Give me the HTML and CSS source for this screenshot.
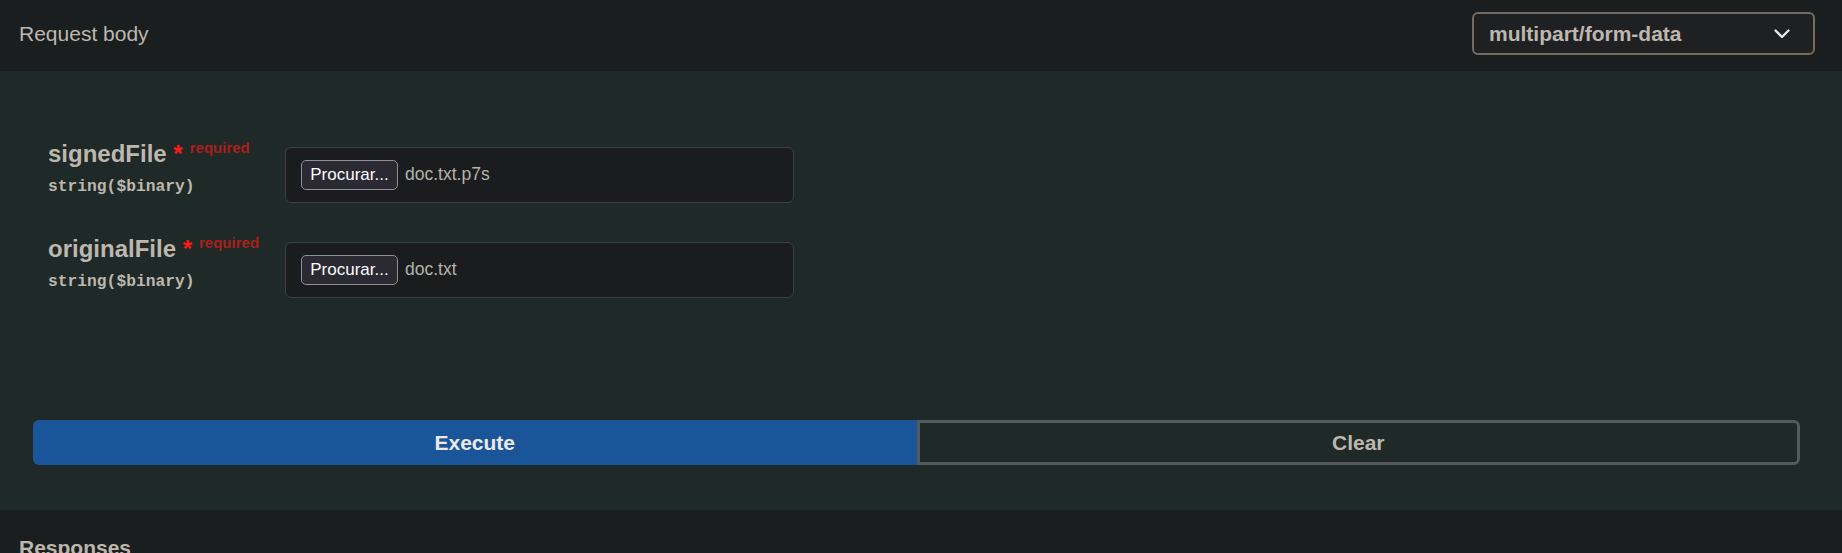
FILE: index.html
```html
<!DOCTYPE html>
<html>
<head>
<meta charset="utf-8">
<link rel="stylesheet" href="styles.css">
</head>
<body>
  <div class="section-header">
    <h4 class="title">Request body</h4>
    <div class="select">
      <span class="select-value">multipart/form-data</span>
      <svg class="chevron" width="16" height="10" viewBox="0 0 16 10"><polyline points="1.5,1.5 8,8 14.5,1.5" fill="none" stroke="#e8e6e3" stroke-width="2.4" stroke-linecap="round" stroke-linejoin="round"/></svg>
    </div>
  </div>
  <div class="section-body">
    <div class="params">
      <div class="param-row">
        <div class="param-label">
          <div class="param-name">signedFile<span class="star">&nbsp;*</span><span class="req">required</span></div>
          <div class="param-type">string($binary)</div>
        </div>
        <div class="file-box">
          <span class="file-btn">Procurar...</span>
          <span class="file-name">doc.txt.p7s</span>
        </div>
      </div>
      <div class="param-row">
        <div class="param-label">
          <div class="param-name">originalFile<span class="star">&nbsp;*</span><span class="req">required</span></div>
          <div class="param-type">string($binary)</div>
        </div>
        <div class="file-box">
          <span class="file-btn">Procurar...</span>
          <span class="file-name">doc.txt</span>
        </div>
      </div>
    </div>
    <div class="btn-group">
      <button class="btn btn-execute">Execute</button>
      <button class="btn btn-clear">Clear</button>
    </div>
  </div>
  <div class="responses">
    <h4 class="responses-title">Responses</h4>
  </div>
</body>
</html>
```

FILE: styles.css
```css
* { box-sizing: border-box; }
html, body { margin: 0; padding: 0; }
body {
  background: #1b1e1f;
  font-family: "Liberation Sans", Arial, sans-serif;
  color: #bdb7ae;
  width: 1842px;
  height: 553px;
  overflow: hidden;
}
.section-header {
  height: 71px;
  display: flex;
  align-items: flex-start;
  justify-content: space-between;
  padding: 12px 27px 0 19px;
  background: #1b1e1f;
}
.title {
  margin: 0;
  font-size: 21px;
  font-weight: normal;
  line-height: 43px;
  color: #bdb7ae;
}
.select {
  width: 343px;
  height: 43px;
  border: 2px solid #746c5f;
  border-radius: 6px;
  background: #1e2022;
  display: flex;
  align-items: center;
  justify-content: space-between;
  padding: 0 23px 0 15px;
}
.select-value {
  font-size: 21px;
  font-weight: bold;
  color: #bdb7ae;
}
.chevron { display: block; margin-top: 1px; }
.section-body {
  height: 439px;
  background: #1f2927;
  padding: 69px 42px 45px 33px;
  display: flex;
  flex-direction: column;
}
.params {
  display: flex;
  flex-direction: column;
  gap: 32px;
  padding-left: 15px;
}
.param-row {
  display: flex;
  align-items: flex-start;
  height: 63px;
}
.param-label { width: 237px; }
.param-name {
  font-size: 24px;
  font-weight: bold;
  line-height: 28px;
  color: #bdb7ae;
  white-space: nowrap;
}
.star { color: #ff1a1a; }
.req {
  font-size: 15px;
  font-weight: bold;
  color: #a8201c;
  padding-left: 7px;
  vertical-align: 9px;
  line-height: 15px;
}
.param-type {
  font-family: "Liberation Mono", "DejaVu Sans Mono", monospace;
  font-weight: bold;
  font-size: 16.3px;
  line-height: 20px;
  padding-top: 9px;
  color: #bdb7ae;
}
.file-box {
  margin-top: 7px;
  width: 509px;
  height: 56px;
  border: 1px solid #3b4042;
  border-radius: 6px;
  background: #1b1c1e;
  display: flex;
  align-items: center;
  padding: 0 15px;
  gap: 7px;
  font-size: 17.5px;
}
.file-btn {
  height: 30px;
  width: 97px;
  display: flex;
  align-items: center;
  justify-content: center;
  background: #2b2a33;
  border: 1px solid #8f8f9d;
  border-radius: 5px;
  color: #fbfbfe;
  font-size: 17px;
  margin-top: -1px;
}
.file-name { color: #b8b2a8; margin-top: -1px; }
.btn-group {
  margin-top: 122px;
  display: grid;
  grid-template-columns: 1fr 1fr;
  height: 45px;
}
.btn {
  font-family: "Liberation Sans", Arial, sans-serif;
  font-size: 21px;
  font-weight: bold;
  height: 45px;
  margin: 0;
  padding: 0;
  cursor: pointer;
}
.btn-execute {
  background: #1a5499;
  border: none;
  border-radius: 6px 0 0 6px;
  color: #ebe9e6;
}
.btn-clear {
  background: transparent;
  border: 3px solid #53595d;
  border-radius: 0 6px 6px 0;
  color: #bdb7ae;
}
.responses {
  height: 43px;
  padding: 26px 0 0 19px;
  background: #1b1e1f;
}
.responses-title {
  margin: 0;
  font-size: 21px;
  line-height: 24px;
  font-weight: bold;
  color: #bdb7ae;
}
```
